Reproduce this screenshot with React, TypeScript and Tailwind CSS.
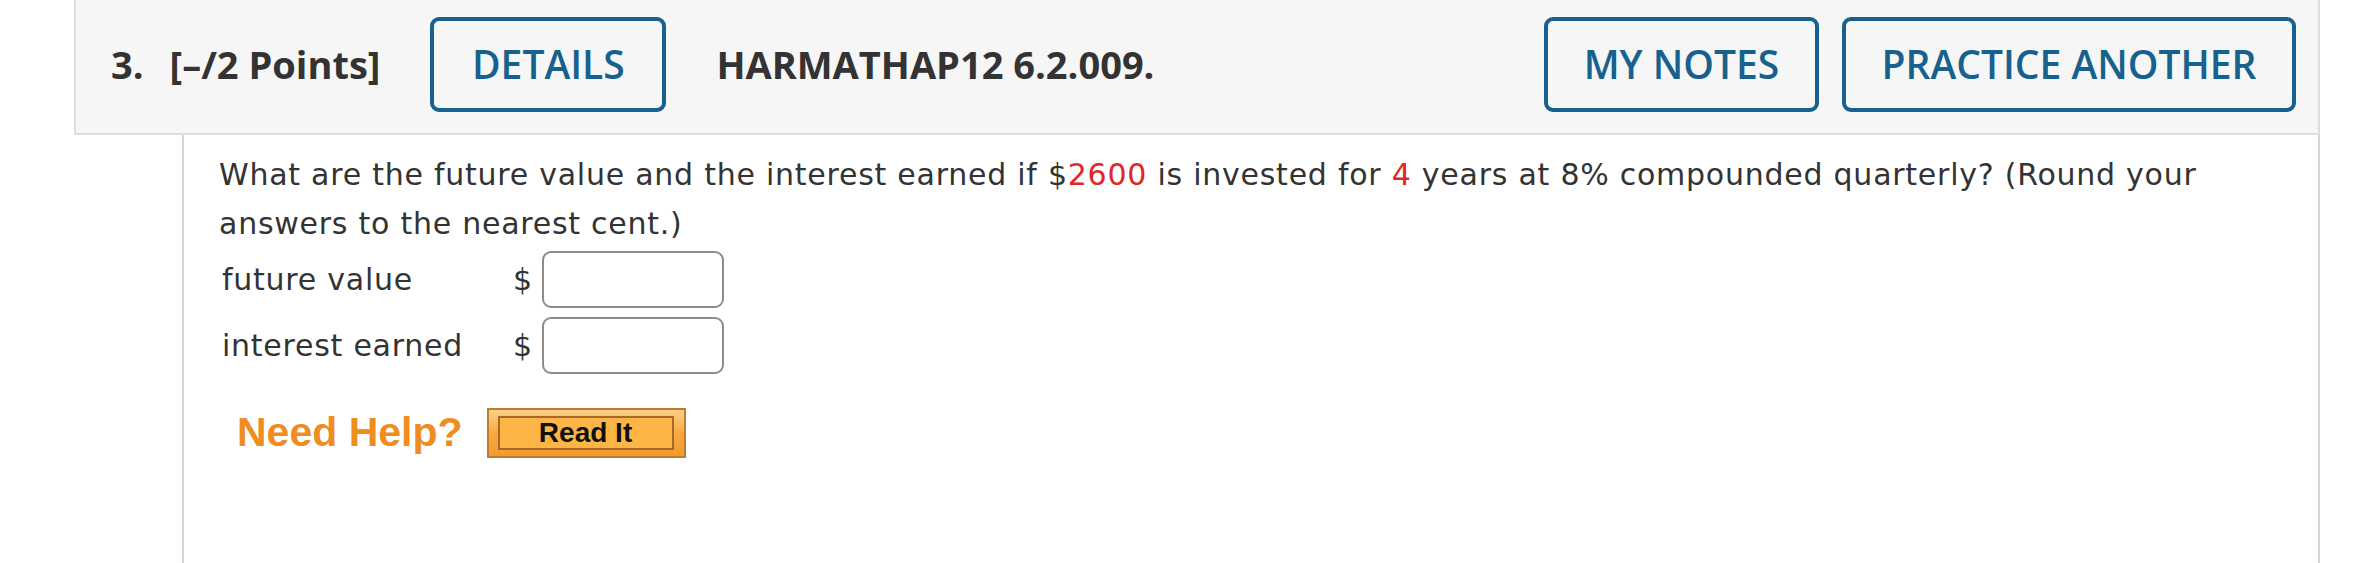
import React from "react";

const openSans = "font-['Open_Sans',sans-serif]";

const HeaderButton = ({ label, width }: { label: string; width: string }) => (
  <button
    type="button"
    className={`${width} h-[95px] flex items-center justify-center rounded-[9px] border-[4px] border-[#17618f] bg-[#f6f6f6] text-[39px] font-semibold text-[#17618f] ${openSans}`}
  >
    {label}
  </button>
);

const AnswerRow = ({ label }: { label: string }) => (
  <div className="flex items-center h-[57px]">
    <span className="w-[294px] pl-[3px]">{label}</span>
    <span className="w-[29px]">$</span>
    <input
      type="text"
      className="w-[182px] h-[57px] rounded-[9px] border-2 border-[#8c8c8c] bg-white outline-none"
    />
  </div>
);

const App = () => {
  return (
    <div className="min-h-screen bg-white">
      {/* question header */}
      <div className="ml-[74px] w-[2246px] h-[135px] bg-[#f6f6f6] border-x-2 border-b-2 border-[#dedede] flex items-center pl-[35px] pr-[22px] pb-[5px]">
        <span className={`text-[38px] font-bold text-[#333] ${openSans}`}>3.</span>
        <span className={`ml-[26px] text-[38px] font-bold text-[#333] ${openSans}`}>
          [–/2 Points]
        </span>
        <div className="ml-[50px]">
          <HeaderButton label="DETAILS" width="w-[236px]" />
        </div>
        <span className={`ml-[50px] text-[38px] font-bold text-[#333] ${openSans}`}>
          HARMATHAP12 6.2.009.
        </span>
        <div className="ml-auto flex gap-[23px]">
          <HeaderButton label="MY NOTES" width="w-[275px]" />
          <HeaderButton label="PRACTICE ANOTHER" width="w-[454px]" />
        </div>
      </div>

      {/* question body */}
      <div className="ml-[182px] w-[2138px] h-[428px] border-x-2 border-[#d6d6d6] pl-[35px] pt-[15px] font-['DejaVu_Sans',sans-serif] text-[30px] tracking-[0.75px] text-[#333]">
        <p className="leading-[49px] pr-[80px]">
          What are the future value and the interest earned if $
          <span className="text-[#e02626]">2600</span> is invested for{" "}
          <span className="text-[#e02626]">4</span> years at 8% compounded quarterly? (Round your
          answers to the nearest cent.)
        </p>
        <div className="mt-[3px] flex flex-col gap-[9px]">
          <AnswerRow label="future value" />
          <AnswerRow label="interest earned" />
        </div>
        <div className="mt-[28px] ml-[18px] flex items-center gap-[24px] tracking-normal">
          <span className="font-['Liberation_Sans',Arial,sans-serif] font-bold text-[41px] text-[#f08d1f]">
            Need Help?
          </span>
          <button
            type="button"
            className="w-[199px] h-[50px] pl-[9px] pr-[10px] py-[6px] border-2 border-[#c27a2c] bg-gradient-to-b from-[#fcd08a] via-[#f7a93d] to-[#f39a2c]"
          >
            <div className="h-full flex items-center justify-center border-2 border-[#a6692a] bg-[#fdb646] font-['Liberation_Sans',Arial,sans-serif] font-bold text-[28px] text-[#111]">
              Read It
            </div>
          </button>
        </div>
      </div>
    </div>
  );
};

export default App;
